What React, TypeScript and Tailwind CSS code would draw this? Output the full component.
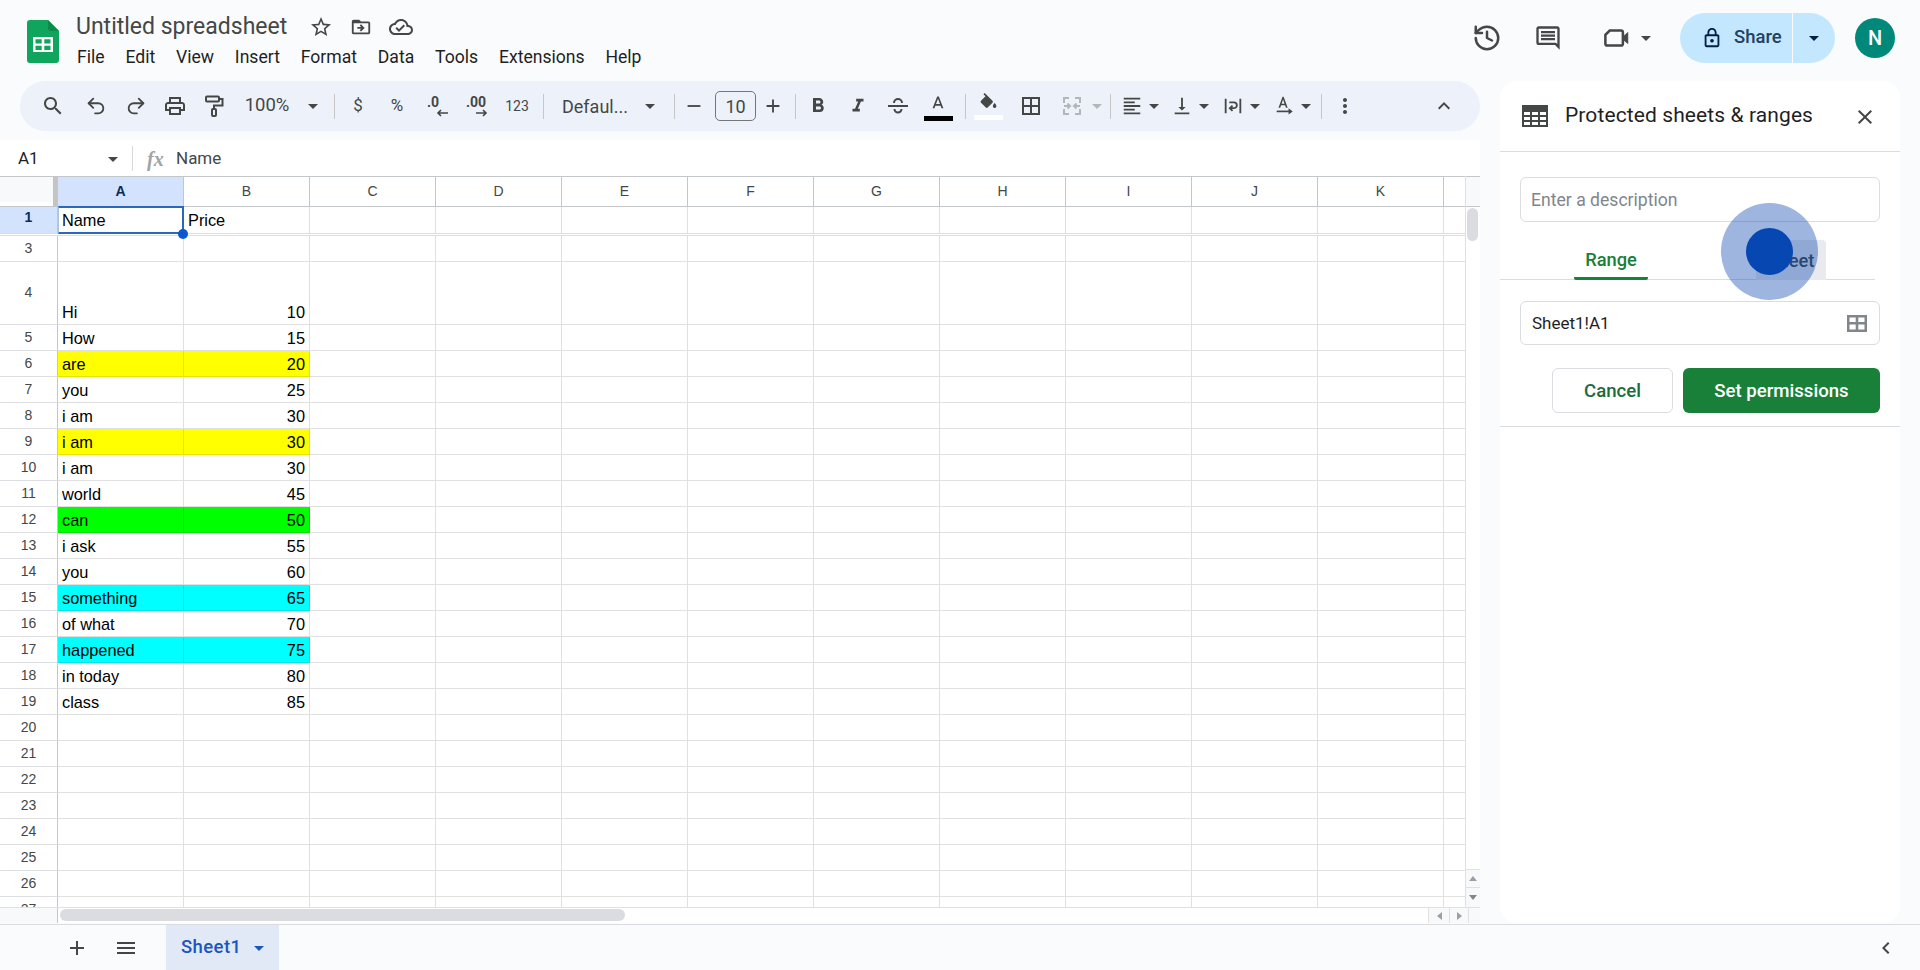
import React from "react";
import { History, Undo2, Redo2 } from "lucide-react";

const P = {
  search: "M15.5 14h-.79l-.28-.27C15.41 12.59 16 11.11 16 9.5 16 5.91 13.09 3 9.5 3S3 5.91 3 9.5 5.91 16 9.5 16c1.61 0 3.09-.59 4.23-1.57l.27.28v.79l5 4.99L20.49 19l-4.99-5zm-6 0C7.01 14 5 11.99 5 9.5S7.01 5 9.5 5 14 7.01 14 9.5 11.99 14 9.5 14z",
  print: "M19 8h-1V3H6v5H5c-1.66 0-3 1.34-3 3v6h4v4h12v-4h4v-6c0-1.66-1.34-3-3-3zM8 5h8v3H8V5zm8 12v2H8v-4h8v2zm2-2v-2H6v2H4v-4c0-.55.45-1 1-1h14c.55 0 1 .45 1 1v4h-2z",
  bold: "M15.6 10.79c.97-.67 1.65-1.77 1.65-2.79 0-2.26-1.75-4-4-4H7v14h7.04c2.09 0 3.71-1.7 3.71-3.79 0-1.52-.86-2.82-2.15-3.42zM10 6.5h3c.83 0 1.5.67 1.5 1.5s-.67 1.5-1.5 1.5h-3v-3zm3.5 9H10v-3h3.5c.83 0 1.5.67 1.5 1.5s-.67 1.5-1.5 1.5z",
  italic: "M10 4v3h2.21l-3.42 8H6v3h8v-3h-2.21l3.42-8H18V4z",
  a: "M11 3 5.5 17h2.25l1.12-3h6.25l1.12 3h2.25L13 3h-2zm-1.38 9L12 5.67 14.38 12H9.62z",
  fill: "M16.56 8.94 7.62 0 6.21 1.41l2.38 2.38-5.15 5.15c-.59.59-.59 1.54 0 2.12l5.5 5.5c.29.29.68.44 1.06.44s.77-.15 1.06-.44l5.5-5.5c.59-.58.59-1.53 0-2.12zM19 11.5s-2 2.17-2 3.5c0 1.1.9 2 2 2s2-.9 2-2c0-1.33-2-3.5-2-3.5z",
  borders: "M3 3v18h18V3H3zm8 16H5v-6h6v6zm0-8H5V5h6v6zm8 8h-6v-6h6v6zm0-8h-6V5h6v6z",
  alignLeft: "M3 21h18v-2H3v2zm0-4h12v-2H3v2zm0-4h18v-2H3v2zm0-4h12V7H3v2zm0-6v2h18V3H3z",
  vBottom: "M16 13h-3V3h-2v10H8l4 4 4-4zM4 19v2h16v-2H4z",
  more: "M12 8c1.1 0 2-.9 2-2s-.9-2-2-2-2 .9-2 2 .9 2 2 2zm0 2c-1.1 0-2 .9-2 2s.9 2 2 2 2-.9 2-2-.9-2-2-2zm0 6c-1.1 0-2 .9-2 2s.9 2 2 2 2-.9 2-2-.9-2-2-2z",
  up: "M7.41 15.41 12 10.83l4.59 4.58L18 14l-6-6-6 6z",
  comment: "M21.99 4c0-1.1-.89-2-1.99-2H4c-1.1 0-2 .9-2 2v12c0 1.1.9 2 2 2h14l4 4-.01-18zM20 4v13.17L18.83 16H4V4h16zM6 12h12v2H6zm0-3h12v2H6zm0-3h12v2H6z",
  lock: "M18 8h-1V6c0-2.76-2.24-5-5-5S7 3.24 7 6v2H6c-1.1 0-2 .9-2 2v10c0 1.1.9 2 2 2h12c1.1 0 2-.9 2-2V10c0-1.1-.9-2-2-2zM9 6c0-1.66 1.34-3 3-3s3 1.34 3 3v2H9V6zm9 14H6V10h12v10zm-6-3c1.1 0 2-.9 2-2s-.9-2-2-2-2 .9-2 2 .9 2 2 2z",
  star: "m22 9.24-7.19-.62L12 2 9.19 8.63 2 9.24l5.46 4.73L5.82 21 12 17.27 18.18 21l-1.63-7.03L22 9.24zM12 15.4l-3.76 2.27 1-4.28-3.32-2.88 4.38-.38L12 6.1l1.71 4.04 4.38.38-3.32 2.88 1 4.28L12 15.4z",
  folder: "M20 6h-8l-2-2H4c-1.1 0-2 .9-2 2v12c0 1.1.9 2 2 2h16c1.1 0 2-.9 2-2V8c0-1.1-.9-2-2-2zm0 12H4V8h16v10zm-8.01-9-1.41 1.41L12.16 12H8v2h4.16l-1.59 1.59L11.99 17 16 13.01 11.99 9z",
  cloud: "M19.35 10.04C18.67 6.59 15.64 4 12 4 9.11 4 6.6 5.64 5.35 8.04 2.34 8.36 0 10.91 0 14c0 3.31 2.69 6 6 6h13c2.76 0 5-2.24 5-5 0-2.64-2.05-4.78-4.65-4.96zM19 18H6c-2.21 0-4-1.79-4-4s1.79-4 4-4h.71C7.37 7.69 9.48 6 12 6c3.04 0 5.5 2.46 5.5 5.5v.5H19c1.66 0 3 1.34 3 3s-1.34 3-3 3zm-9-3.82-2.09-2.09L6.5 13.5 10 17l6.01-6.01-1.41-1.41z",
  close: "M19 6.41 17.59 5 12 10.59 6.41 5 5 6.41 10.59 12 5 17.59 6.41 19 12 13.41 17.59 19 19 17.59 13.41 12z",
  plus: "M19 13h-6v6h-2v-6H5v-2h6V5h2v6h6v2z",
  minus: "M19 13H5v-2h14v2z",
  menu: "M3 18h18v-2H3v2zm0-5h18v-2H3v2zm0-7v2h18V6H3z",
  left: "M15.41 7.41 14 6l-6 6 6 6 1.41-1.41L10.83 12z",
  caret: "M7 10l5 5 5-5z",
};

function Mi({ d, className }: { d: string; className: string }) {
  return (
    <svg viewBox="0 0 24 24" fill="currentColor" className={"shrink-0 " + className}>
      <path d={d} />
    </svg>
  );
}

function Caret({ className = "text-[#444746]" }: { className?: string }) {
  return (
    <span className={"flex w-[22px] shrink-0 items-center justify-center " + className}>
      <Mi d={P.caret} className="h-[24px] w-[24px]" />
    </span>
  );
}

function Sep() {
  return <span className="block h-[25px] w-px bg-[#c7c7c7]" />;
}

function Logo() {
  return (
    <svg viewBox="0 0 32 43" className="h-[43px] w-[32px] shrink-0">
      <path d="M3 0H21L32 11V40a3 3 0 0 1-3 3H3a3 3 0 0 1-3-3V3a3 3 0 0 1 3-3z" fill="#10a55c" />
      <path d="M21 0l11 11h-8a3 3 0 0 1-3-3z" fill="#0c8a4a" />
      <path d="M6 17h20v15H6z" fill="#fff" />
      <path d="M8.5 19.2h6.2v4.2H8.5zM17.3 19.2h6.2v4.2h-6.2zM8.5 25.7h6.2v4.2H8.5zM17.3 25.7h6.2v4.2h-6.2z" fill="#10a55c" />
    </svg>
  );
}

const MENUS = ["File", "Edit", "View", "Insert", "Format", "Data", "Tools", "Extensions", "Help"];

function Header() {
  return (
    <div className="flex h-[81px] shrink-0 items-start">
      <div className="ml-[27px] mt-[20px]">
        <Logo />
      </div>
      <div className="ml-[17px] mt-[12px] flex flex-col">
        <div className="flex h-[30px] items-center text-[#444746]">
          <span className="w-[233px] whitespace-nowrap text-[23px] leading-[30px]">Untitled spreadsheet</span>
          <Mi d={P.star} className="h-[24px] w-[24px]" />
          <Mi d={P.folder} className="ml-[17px] h-[22px] w-[22px]" />
          <Mi d={P.cloud} className="ml-[17px] h-[24px] w-[24px]" />
        </div>
        <div className="ml-[1px] mt-[3px] flex gap-[20.8px] text-[17.6px] leading-[24px] text-[#1f1f1f]">
          {MENUS.map((m) => (
            <span key={m}>{m}</span>
          ))}
        </div>
      </div>
      <div className="ml-auto mr-[25px] mt-[13px] flex h-[50px] items-center text-[#444746]">
        <History className="h-[30px] w-[30px]" strokeWidth={2} />
        <Mi d={P.comment} className="ml-[32px] h-[28px] w-[28px]" />
        <svg viewBox="0 0 24 24" className="ml-[39px] h-[30px] w-[30px] text-[#444746]" fill="none" stroke="currentColor" strokeWidth="2">
          <path d="M7 6h9a1.5 1.5 0 0 1 1.5 1.5v9a1.5 1.5 0 0 1-1.5 1.5H5a1.5 1.5 0 0 1-1.5-1.5V9.5z" />
          <path d="M18 10.5 21.5 7.5v9L18 13.5z" fill="currentColor" strokeWidth="0.5" />
        </svg>
        <span className="ml-[4px]">
          <Caret />
        </span>
        <div className="ml-[23px] flex h-[50px] w-[155px] items-center overflow-hidden rounded-full bg-[#c2e7ff] text-[#041e49]">
          <div className="flex h-full w-[113px] items-center border-r border-[#f9fbfd] pl-[21px]">
            <Mi d={P.lock} className="h-[22px] w-[22px]" />
            <span className="ml-[11px] text-[18.5px] font-medium text-[#26405f]">Share</span>
          </div>
          <div className="flex flex-1 justify-center">
            <Caret className="text-[#041e49]" />
          </div>
        </div>
        <div className="ml-[20px] flex h-[40px] w-[40px] items-center justify-center rounded-full bg-[#00897b] text-[20px] font-medium text-white">
          N
        </div>
      </div>
    </div>
  );
}

function Toolbar() {
  const box = "flex h-full shrink-0 items-center justify-center";
  return (
    <div className="ml-[20px] flex h-[50px] w-[1460px] shrink-0 items-center rounded-full bg-[#edf2fa] pl-[14px] pr-[18px] text-[#444746]">
      <div className={box + " w-[38px]"}><Mi d={P.search} className="h-[24px] w-[24px]" /></div>
      <div className={box + " w-[48px]"}><Undo2 className="h-[22px] w-[22px]" strokeWidth={2} /></div>
      <div className={box + " w-[32px]"}><Redo2 className="h-[22px] w-[22px]" strokeWidth={2} /></div>
      <div className={box + " w-[46px]"}><Mi d={P.print} className="h-[24px] w-[24px]" /></div>
      <div className={box + " w-[32px]"}>
        <svg viewBox="0 0 24 24" className="h-[24px] w-[24px]" fill="none" stroke="currentColor" strokeWidth="2">
          <rect x="4" y="2.5" width="13" height="5" rx="1" />
          <path d="M17 5h3.5v6.5H12V15" />
          <rect x="10" y="15" width="4" height="7" rx="1" />
        </svg>
      </div>
      <div className={box + " w-[74px] text-[18.5px]"}>100%</div>
      <div className={box + " w-[18px]"}><Caret /></div>
      <div className={box + " w-[24px]"}><Sep /></div>
      <div className={box + " w-[24px] text-[17px]"}>$</div>
      <div className={box + " w-[54px] text-[17px]"}>%</div>
      <div className={box + " w-[32px] flex-col"}>
        <span className="mr-[14px] text-[14px] font-bold leading-[13px]">.0</span>
        <svg viewBox="0 0 12 8" className="ml-[4px] h-[8px] w-[12px]" fill="none" stroke="currentColor" strokeWidth="1.6"><path d="M12 4H2M5 1 2 4l3 3" /></svg>
      </div>
      <div className={box + " w-[52px] flex-col"}>
        <span className="mr-[12px] text-[14px] font-bold leading-[13px]">.00</span>
        <svg viewBox="0 0 12 8" className="h-[8px] w-[12px]" fill="none" stroke="currentColor" strokeWidth="1.6"><path d="M0 4h10M7 1l3 3-3 3" /></svg>
      </div>
      <div className={box + " w-[18px] whitespace-nowrap text-[14px]"}>123</div>
      <div className={box + " w-[34px]"}><Sep /></div>
      <div className="flex h-full w-[76px] shrink-0 items-center whitespace-nowrap pl-[2px] text-[18px]">Defaul...</div>
      <div className={box + " w-[28px]"}><Caret /></div>
      <div className={box + " w-[20px]"}><Sep /></div>
      <div className={box + " w-[20px]"}><Mi d={P.minus} className="h-[22px] w-[22px]" /></div>
      <div className="ml-[11px] flex h-[30px] w-[41px] shrink-0 items-center justify-center rounded-[5px] border border-[#747775] text-[18px]">10</div>
      <div className={box + " w-[34px]"}><Mi d={P.plus} className="h-[22px] w-[22px]" /></div>
      <div className={box + " w-[10px]"}><Sep /></div>
      <div className={box + " w-[36px]"}><Mi d={P.bold} className="h-[24px] w-[24px]" /></div>
      <div className={box + " w-[43px]"}><Mi d={P.italic} className="h-[22px] w-[22px]" /></div>
      <div className={box + " w-[38px]"}>
        <svg viewBox="0 0 24 24" className="h-[24px] w-[24px]" fill="none" stroke="currentColor" strokeWidth="2">
          <path d="M2 12h20M8 9a4 4 0 0 1 8 0M8.5 15a3.5 3.5 0 0 0 7 0" />
        </svg>
      </div>
      <div className={box + " w-[42px] flex-col"}>
        <Mi d={P.a} className="mt-[2px] h-[22px] w-[20px]" />
        <span className="mt-[1px] block h-[5px] w-[29px] bg-black" />
      </div>
      <div className={box + " w-[12px]"}><Sep /></div>
      <div className={box + " w-[34px] flex-col"}>
        <Mi d={P.fill} className="mt-[1px] h-[21px] w-[21px]" />
        <span className="mt-[1px] block h-[5px] w-[29px] bg-white" />
      </div>
      <div className={box + " w-[51px]"}><Mi d={P.borders} className="h-[24px] w-[24px]" /></div>
      <div className={box + " w-[32px] text-[#b4b7ba]"}>
        <svg viewBox="0 0 24 24" className="h-[24px] w-[24px]" fill="none" stroke="currentColor" strokeWidth="2">
          <path d="M9 4H4v5M15 4h5v5M9 20H4v-5M15 20h5v-5M4 12h6M7.5 9.5 10 12l-2.5 2.5M20 12h-6M16.5 9.5 14 12l2.5 2.5" />
        </svg>
      </div>
      <div className={box + " w-[18px]"}><Caret className="text-[#b4b7ba]" /></div>
      <div className={box + " mr-[6px] w-[9px]"}><Sep /></div>
      <div className="flex w-[44px] shrink-0 items-center">
        <Mi d={P.alignLeft} className="h-[22px] w-[22px]" />
        <Caret />
      </div>
      <div className="ml-[6px] flex w-[44px] shrink-0 items-center">
        <Mi d={P.vBottom} className="h-[26px] w-[22px]" />
        <Caret />
      </div>
      <div className="ml-[7px] flex w-[44px] shrink-0 items-center">
        <svg viewBox="0 0 24 24" className="h-[22px] w-[22px] shrink-0" fill="none" stroke="currentColor" strokeWidth="2">
          <path d="M4 4v16M20 4v16M8 8h5a3.2 3.2 0 0 1 0 6.4H9M11.5 11.5 8.5 14.4l3 3" />
        </svg>
        <Caret />
      </div>
      <div className="ml-[7px] flex w-[44px] shrink-0 items-center">
        <svg viewBox="0 0 24 24" className="h-[24px] w-[22px] shrink-0" fill="currentColor">
          <path d="M10.4 2 6 14h1.9l.9-2.7h4.4l.9 2.7H16L11.6 2h-1.2zm-1 7.6L11 4.9l1.6 4.7H9.4z" />
          <path d="M4 17h15v1.8H4z" />
          <path d="M17 14.5l4.5 3.4-4.5 3.4z" />
        </svg>
        <Caret />
      </div>
      <div className={box + " w-[8px]"}><Sep /></div>
      <div className={box + " w-[40px]"}><Mi d={P.more} className="h-[24px] w-[24px]" /></div>
      <div className={box + " ml-auto w-[36px]"}><Mi d={P.up} className="h-[24px] w-[24px]" /></div>
    </div>
  );
}

function FormulaBar() {
  return (
    <div className="flex h-[36px] shrink-0 items-center bg-white pt-[1px] text-[17px] text-[#444746]">
      <span className="ml-[18px] w-[84px] text-[#1f1f1f]">A1</span>
      <Caret />
      <span className="ml-[8px] block h-[25px] w-px bg-[#d5d7da]" />
      <span className="ml-[14px] w-[29px] font-['Liberation_Serif',serif] text-[20px] font-bold italic text-[#a0a3a6]">fx</span>
      <span>Name</span>
    </div>
  );
}

const COLS = ["A", "B", "C", "D", "E", "F", "G", "H", "I", "J", "K"];

type Row = { n: number; a?: string; b?: number; color?: string; h?: string; labelPad?: string };

const ROWS: Row[] = [
  { n: 3, h: "h-[26px]" },
  { n: 4, a: "Hi", b: 10, h: "h-[63px]", labelPad: "pt-[22px]" },
  { n: 5, a: "How", b: 15 },
  { n: 6, a: "are", b: 20, color: "bg-[#ffff00]" },
  { n: 7, a: "you", b: 25 },
  { n: 8, a: "i am", b: 30 },
  { n: 9, a: "i am", b: 30, color: "bg-[#ffff00]" },
  { n: 10, a: "i am", b: 30 },
  { n: 11, a: "world", b: 45 },
  { n: 12, a: "can", b: 50, color: "bg-[#00ff00]" },
  { n: 13, a: "i ask", b: 55 },
  { n: 14, a: "you", b: 60 },
  { n: 15, a: "something", b: 65, color: "bg-[#00ffff]" },
  { n: 16, a: "of what", b: 70 },
  { n: 17, a: "happened", b: 75, color: "bg-[#00ffff]" },
  { n: 18, a: "in today", b: 80 },
  { n: 19, a: "class", b: 85 },
  ...[20, 21, 22, 23, 24, 25, 26, 27].map((n) => ({ n })),
];

const GRIDLINE = "border-b border-r border-[#e0e0e0]";
const FILLLINE = "border-b border-r border-black/10";

function DataRow({ r }: { r: Row }) {
  const line = r.color ? FILLLINE : GRIDLINE;
  const h = r.h ?? "h-[26px]";
  return (
    <div className={"flex shrink-0 " + h}>
      <div className={"flex h-full w-[58px] shrink-0 items-start justify-center border-b border-r border-b-[#dcdee1] border-r-[#c4c7ca] text-[14px] leading-[17px] text-[#444746] " + (r.labelPad ?? "pt-[4px]")}>
        {r.n}
      </div>
      <div className={"flex h-full w-[126px] shrink-0 items-end pb-[2px] pl-[4px] text-[16.33px] leading-[20px] text-black " + line + " " + (r.color ?? "")}>
        {r.a}
      </div>
      <div className={"flex h-full w-[126px] shrink-0 items-end justify-end pb-[2px] pr-[4px] text-[16.33px] leading-[20px] text-black " + line + " " + (r.color ?? "")}>
        {r.b}
      </div>
      {COLS.slice(2).map((c) => (
        <div key={c} className={"h-full w-[126px] shrink-0 " + GRIDLINE} />
      ))}
      <div className="h-full w-[21px] shrink-0 border-b border-[#e0e0e0]" />
    </div>
  );
}

function Grid() {
  return (
    <div className="flex h-[731px] shrink-0 overflow-hidden bg-white font-['Liberation_Sans',sans-serif]">
      <div className="flex w-[1465px] shrink-0 flex-col">
        <div className="flex h-[31px] shrink-0 border-b border-t border-[#c4c7ca]">
          <div className="flex w-[58px] shrink-0 border-r border-[#c4c7ca]">
            <div className="h-[25px] w-[53px] bg-[#f8f9fa]" />
            <div className="h-full w-[4px] bg-[#c4c4c4]" />
          </div>
          {COLS.map((c, i) => (
            <div
              key={c}
              className={
                "flex w-[126px] shrink-0 items-center justify-center border-r border-[#c4c7ca] text-[14px] " +
                (i === 0 ? "bg-[#d3e3fd] font-bold text-[#0b2a5c]" : "text-[#444746]")
              }
            >
              {c}
            </div>
          ))}
          <div className="w-[21px] shrink-0" />
        </div>
        <div className="flex h-[27px] shrink-0 border-b border-[#dcdee1]">
          <div className="flex w-[58px] shrink-0 justify-center border-r border-[#c4c7ca] bg-[#d3e3fd] pt-[2px] text-[14px] font-bold leading-[17px] text-[#0b2a5c]">
            1
          </div>
          <div className="relative flex w-[126px] shrink-0 items-end pb-[3px] pl-[4px] text-[16.33px] leading-[20px] text-black">
            Name
            <div className="absolute -bottom-px -top-px left-0 right-0 border-2 border-l border-[#2a68bd] border-l-[#2a68bd]/40" />
            <div className="absolute bottom-[-6px] right-[-4px] z-10 h-[10px] w-[10px] rounded-full bg-[#0b57d0]" />
          </div>
          <div className="flex w-[126px] shrink-0 items-end border-r border-[#e0e0e0] pb-[3px] pl-[4px] text-[16.33px] leading-[20px] text-black">
            Price
          </div>
          {COLS.slice(2).map((c) => (
            <div key={c} className="w-[126px] shrink-0 border-r border-[#e0e0e0]" />
          ))}
        </div>
        <div className="h-[2px] shrink-0 border-b border-[#dcdee1]" />
        {ROWS.map((r) => (
          <DataRow key={r.n} r={r} />
        ))}
      </div>
      <div className="flex w-[15px] shrink-0 flex-col border-l border-[#e0e0e0]">
        <div className="h-[31px] shrink-0 border-b border-t border-[#c4c7ca] bg-[#f8f9fa]" />
        <div className="ml-[1px] mt-[1px] h-[33px] w-[11px] rounded-full bg-[#dadce0]" />
        <div className="mt-auto flex h-[19px] items-center justify-center border-b border-t border-[#e0e0e0] bg-[#f8f9fa] text-[#9aa0a6]">
          <svg viewBox="0 0 8 5" className="h-[5px] w-[8px]" fill="currentColor"><path d="M0 5 4 0l4 5z" /></svg>
        </div>
        <div className="flex h-[19px] items-center justify-center bg-[#f8f9fa] text-[#80868b]">
          <svg viewBox="0 0 8 5" className="h-[5px] w-[8px]" fill="currentColor"><path d="M0 0 4 5l4-5z" /></svg>
        </div>
      </div>
    </div>
  );
}

function HScroll() {
  return (
    <div className="flex h-[16px] shrink-0 border-t border-[#e0e0e0] bg-white">
      <div className="h-full w-[58px] shrink-0 border-r border-[#c4c7ca] bg-[#f8f9fa]" />
      <div className="ml-[2px] mt-[1px] h-[12px] w-[565px] rounded-full bg-[#dadce0]" />
      <div className="ml-auto flex h-full text-[#9aa0a6]">
        <div className="flex w-[21px] items-center justify-center border-l border-[#e0e0e0] bg-[#f8f9fa]">
          <svg viewBox="0 0 5 8" className="h-[8px] w-[5px]" fill="currentColor"><path d="M5 0 0 4l5 4z" /></svg>
        </div>
        <div className="flex w-[19px] items-center justify-center border-l border-[#e0e0e0] bg-[#f8f9fa]">
          <svg viewBox="0 0 5 8" className="h-[8px] w-[5px]" fill="currentColor"><path d="M0 0l5 4-5 4z" /></svg>
        </div>
        <div className="w-[12px] border-l border-[#e0e0e0] bg-[#f8f9fa]" />
      </div>
    </div>
  );
}

function Panel() {
  return (
    <div className="relative ml-[20px] h-[842px] w-[400px] shrink-0 rounded-[16px] bg-white">
      <div className="flex h-[71px] items-center border-b border-[#dadce0]">
        <svg viewBox="0 0 26 22" className="ml-[22px] h-[22px] w-[26px] shrink-0 text-[#444746]" fill="currentColor">
          <path d="M0 0h26v22H0zM2 7v3h6V7zm8 0v3h6V7zm8 0v3h6V7zM2 12v3h6v-3zm8 0v3h6v-3zm8 0v3h6v-3zM2 17v3h6v-3zm8 0v3h6v-3zm8 0v3h6v-3z" fillRule="evenodd" />
        </svg>
        <span className="ml-[17px] w-[288px] whitespace-nowrap text-[21px] tracking-[0.1px] text-[#1f1f1f]">Protected sheets &amp; ranges</span>
        <Mi d={P.close} className="mt-[2px] h-[24px] w-[24px] text-[#444746]" />
      </div>
      <div className="ml-[20px] mt-[25px] flex h-[45px] w-[360px] items-center rounded-[6px] border border-[#dadce0] pl-[10px] pt-[1px] text-[17.6px] text-[#80868b]">
        Enter a description
      </div>
      <div className="mt-[18px] flex h-[40px] w-[375px] border-b border-[#dadce0] text-[18.3px] font-medium">
        <div className="ml-[74px] flex h-[40px] w-[74px] items-center justify-center rounded-b-[2px] border-b-[3px] border-[#188038] pt-[3px] text-[#188038]">
          Range
        </div>
        <div className="ml-[108px] flex h-[40px] w-[70px] items-center justify-center rounded-t-[4px] bg-[#e8eaed] pt-[1px] text-[#444746]">
          Sheet
        </div>
      </div>
      <div className="ml-[20px] mt-[21px] flex h-[44px] w-[360px] items-center justify-between rounded-[6px] border border-[#dadce0] pl-[11px] pr-[12px] pt-[1px] text-[17px] text-[#1f1f1f]">
        Sheet1!A1
        <svg viewBox="0 0 20 17" className="h-[17px] w-[20px] shrink-0 text-[#80868b]" fill="currentColor">
          <path d="M0 0h20v17H0zM2.5 2.5v4.5h6.2V2.5zm8.8 0v4.5h6.2V2.5zM2.5 9.6v4.9h6.2V9.6zm8.8 0v4.9h6.2V9.6z" fillRule="evenodd" />
        </svg>
      </div>
      <div className="ml-[52px] mt-[23px] flex h-[45px] gap-[10px] text-[18.6px] font-medium">
        <div className="flex w-[121px] items-center justify-center rounded-[6px] border border-[#dadce0] pt-[2px] text-[#1e6b3a]">
          Cancel
        </div>
        <div className="flex w-[197px] items-center justify-center rounded-[6px] bg-[#188038] pt-[2px] text-white">
          Set permissions
        </div>
      </div>
      <div className="mt-[13px] h-px bg-[#dadce0]" />
      <div className="absolute left-[221px] top-[122px] flex h-[97px] w-[97px] items-center justify-center rounded-full bg-[#0a47b0]/40">
        <div className="h-[47px] w-[47px] rounded-full bg-[#0747b2]" />
      </div>
    </div>
  );
}

function TabBar() {
  return (
    <div className="flex h-[46px] shrink-0 items-center border-t border-[#dadce0] text-[#444746]">
      <Mi d={P.plus} className="ml-[65px] h-[24px] w-[24px]" />
      <Mi d={P.menu} className="ml-[25px] h-[24px] w-[24px]" />
      <div className="ml-[28px] flex h-full w-[113px] items-center bg-[#e1e9f7] pl-[15px] text-[18.5px] font-medium tracking-[0.4px] text-[#1b56bf]">
        <span className="w-[67px]">Sheet1</span>
        <Caret className="text-[#1b56bf]" />
      </div>
      <Mi d={P.left} className="ml-auto mr-[22px] h-[24px] w-[24px]" />
    </div>
  );
}

export default function App() {
  return (
    <div className="flex h-[970px] w-[1920px] flex-col overflow-hidden bg-[#f9fbfd] font-['Roboto',sans-serif]">
      <Header />
      <div className="flex min-h-0 flex-1">
        <div className="flex w-[1480px] shrink-0 flex-col">
          <Toolbar />
          <div className="h-[9px] shrink-0" />
          <FormulaBar />
          <Grid />
          <HScroll />
        </div>
        <Panel />
      </div>
      <TabBar />
    </div>
  );
}
